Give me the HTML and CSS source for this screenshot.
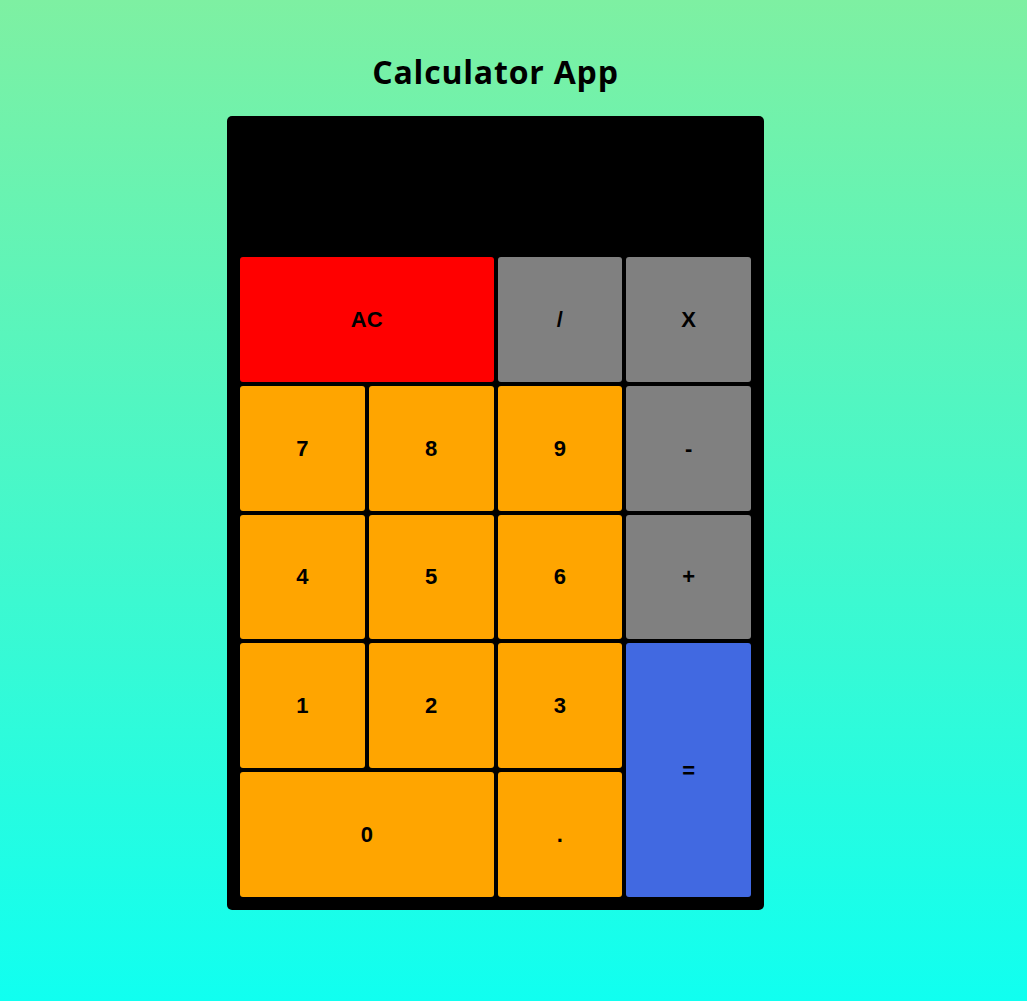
FILE: index.html
```html
<!doctype html>
<html lang="en">
<head>
    <meta charset="utf-8"/>
    <title>Calculator App</title>
    <link rel="stylesheet" href="styles.css">
</head>
<body>

    <div class="page">
        <h1 class="title">Calculator App</h1>
        <div class="calc">
            <div class="display"></div>
            <button class="btn clear wide">AC</button>
            <button class="btn op">/</button>
            <button class="btn op">X</button>
            <button class="btn num">7</button>
            <button class="btn num">8</button>
            <button class="btn num">9</button>
            <button class="btn op">-</button>
            <button class="btn num">4</button>
            <button class="btn num">5</button>
            <button class="btn num">6</button>
            <button class="btn op">+</button>
            <button class="btn num">1</button>
            <button class="btn num">2</button>
            <button class="btn num">3</button>
            <button class="btn equal">=</button>
            <button class="btn num wide">0</button>
            <button class="btn num">.</button>
        </div>
    </div>

</body>
</html>
```

FILE: styles.css
```css
html, body {
    margin: 0;
    padding: 0;
}

body {
    min-height: 100vh;
    background: linear-gradient(to bottom, #7ef0a2, #10fff0);
    font-family: "Liberation Sans", Arial, sans-serif;
}

.page {
    display: flex;
    flex-direction: column;
    align-items: center;
    padding: 51px 36px 0 0;
}

.title {
    margin: 0 0 23px;
    font-family: "Open Sans", "Noto Sans", sans-serif;
    font-size: 32px;
    font-weight: bold;
    letter-spacing: 0.8px;
    line-height: 42px;
    color: #000;
}

.calc {
    width: 511px;
    padding: 13px;
    background: #000;
    border-radius: 5px;
    display: grid;
    grid-template-columns: repeat(4, 1fr);
    grid-template-rows: 124px repeat(5, 124.75px);
    gap: 4px;
}

.display {
    grid-column: span 4;
}

.btn {
    border: none;
    border-radius: 3px;
    font-family: "Liberation Sans", Arial, sans-serif;
    font-size: 22px;
    font-weight: bold;
    color: #000;
    cursor: pointer;
    padding: 1px 0 0;
}

.btn.wide {
    grid-column: span 2;
}

.num {
    background: #ffa500;
}

.op {
    background: #808080;
}

.clear {
    background: #ff0000;
}

.equal {
    background: #4169e1;
    grid-row: span 2;
}
```
